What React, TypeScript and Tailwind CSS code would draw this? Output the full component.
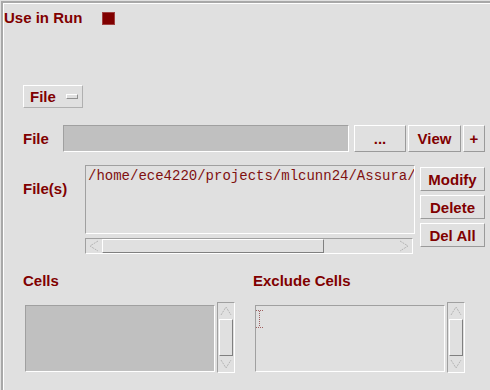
const red = 'text-[#800000]';
const label = `font-['Liberation_Sans',Arial,sans-serif] font-bold text-[15px] leading-[17px] ${red}`;
const raised = 'border border-t-white border-l-white border-r-[#9a9a9a] border-b-[#9a9a9a]';
const sunken = 'border border-t-[#a0a0a0] border-l-[#a0a0a0] border-r-white border-b-white';

function Button({ text, className }: { text: string; className: string }) {
  return (
    <div className={`flex items-center justify-center bg-[#e0e0e0] ${raised} ${label} ${className}`}>{text}</div>
  );
}

function Arrow({ dir }: { dir: 'up' | 'down' | 'left' | 'right' }) {
  const pts = {
    up: '3,12 8,4 13,12',
    down: '3,4 8,12 13,4',
    left: '12,3 4,8 12,13',
    right: '4,3 12,8 4,13',
  }[dir];
  return (
    <svg width="16" height="16" viewBox="0 0 16 16" className="shrink-0">
      <polyline points={pts} fill="none" stroke="#b4b4b4" strokeWidth="1" strokeDasharray="2 1" />
    </svg>
  );
}

function VScroll() {
  return (
    <div className={`flex h-[71px] w-[18px] flex-col items-center ${sunken}`}>
      <Arrow dir="up" />
      <div className={`h-[39px] w-[14px] ${raised} border-r-[#808080] border-b-[#808080]`} />
      <Arrow dir="down" />
    </div>
  );
}

function HScroll() {
  return (
    <div className={`mt-[4px] flex h-[16px] w-[328px] items-center ${sunken}`}>
      <Arrow dir="left" />
      <div className={`h-[14px] w-[222px] ${raised} border-r-[#808080] border-b-[#808080]`} />
      <div className="flex-1" />
      <Arrow dir="right" />
    </div>
  );
}

export default function App() {
  return (
    <div className="h-[390px] w-[490px] overflow-hidden bg-[#e0e0e0]">
      <div className="ml-[1px] mt-[1px] h-full border-l-2 border-t-2 border-[#a8a8a8]">
        <div className="h-full border-l border-t border-white pt-[5px]">
          {/* Use in Run */}
          <div className="flex items-start">
            <span className={`w-[98px] ${label}`}>Use in Run</span>
            <div className="mt-[3px] h-[13px] w-[13px] border border-[#a04040] bg-[#800000]" />
          </div>

          {/* File dropdown */}
          <div className={`ml-[19px] mt-[59px] flex h-[23px] w-[60px] items-center pl-[6px] ${raised} border-r-[#b0b0b0] border-b-[#b0b0b0]`}>
            <span className={label}>File</span>
            <div className={`ml-[10px] h-[5px] w-[12px] ${raised} border-r-[#909090] border-b-[#909090]`} />
          </div>

          {/* File row */}
          <div className="ml-[19px] mt-[17px] flex h-[27px] items-center">
            <span className={`w-[40px] ${label}`}>File</span>
            <div className={`h-[27px] w-[286px] bg-[#c0c0c0] ${sunken}`} />
            <Button text="..." className="ml-[5px] h-[27px] w-[52px]" />
            <Button text="View" className="ml-[2px] h-[27px] w-[53px]" />
            <Button text="+" className="ml-[2px] h-[27px] w-[22px]" />
          </div>

          {/* File(s) row */}
          <div className="ml-[19px] mt-[13px] flex items-start">
            <span className={`mt-[15px] w-[62px] ${label}`}>File(s)</span>
            <div className="flex flex-col">
              <div
                className={`h-[69px] w-[330px] overflow-hidden whitespace-nowrap pl-[2px] pt-[2px] font-['Liberation_Mono',monospace] text-[14px] leading-[17px] text-[#801010] ${sunken}`}
              >
                /home/ece4220/projects/mlcunn24/Assura/
              </div>
              <HScroll />
            </div>
            <div className="ml-[5px] mt-[2px] flex flex-col gap-[4px]">
              <Button text="Modify" className="h-[24px] w-[65px]" />
              <Button text="Delete" className="h-[24px] w-[65px]" />
              <Button text="Del All" className="h-[24px] w-[65px]" />
            </div>
          </div>

          {/* Cells */}
          <div className="ml-[19px] mt-[18px] flex">
            <div className="flex w-[230px] flex-col">
              <span className={label}>Cells</span>
              <div className="mt-[13px] flex items-start">
                <div className={`ml-[2px] mt-[3px] h-[67px] w-[190px] bg-[#c0c0c0] ${sunken}`} />
                <div className="ml-[2px]">
                  <VScroll />
                </div>
              </div>
            </div>
            <div className="flex flex-col">
              <span className={label}>Exclude Cells</span>
              <div className="mt-[13px] flex items-start">
                <div className={`ml-[2px] mt-[3px] h-[67px] w-[190px] ${sunken}`}>
                  <svg width="7" height="18" viewBox="0 0 7 18" className="mt-[4px]">
                    <line x1="3.5" y1="1" x2="3.5" y2="17" stroke="#a06060" strokeDasharray="1 1" />
                    <line x1="0" y1="0.5" x2="7" y2="0.5" stroke="#a06060" strokeDasharray="1 1" />
                    <line x1="0" y1="17.5" x2="7" y2="17.5" stroke="#a06060" strokeDasharray="1 1" />
                  </svg>
                </div>
                <div className="ml-[2px]">
                  <VScroll />
                </div>
              </div>
            </div>
          </div>
        </div>
      </div>
    </div>
  );
}
